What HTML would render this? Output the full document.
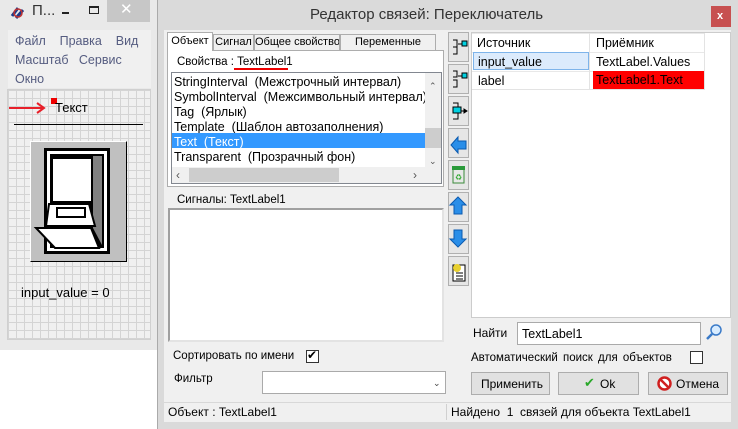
<!DOCTYPE html>
<html><head><meta charset="utf-8"><style>
*{box-sizing:border-box;margin:0;padding:0}
body{width:738px;height:429px;overflow:hidden;background:#fff;font-family:"Liberation Sans",sans-serif;font-size:12px;color:#000;position:relative}
.a{position:absolute}
.t{position:absolute;white-space:nowrap;line-height:14px}
.btn{position:absolute;background:#e1e1e1;border:1px solid #adadad}
.vb{position:absolute;left:448px;width:21px;height:30px;background:#e6e6e6;border:1px solid #b0b0b0}
.tab{position:absolute;background:#f0f0f0;border:1px solid #adadad;font-size:11px;text-align:center;line-height:15px;overflow:hidden;white-space:nowrap}
</style></head><body>
<!-- left window -->
<div class="a" style="left:0;top:0;width:158px;height:350px;background:#e9e9e9;border-right:1px solid #c8c8c8"></div>
<div class="a" style="left:107px;top:0;width:43px;height:22px;background:#c7c7c7"></div>
<div class="t" style="left:120px;top:3px;font-size:15px;color:#fff">✕</div>
<div class="t" style="left:32px;top:4px;font-size:15px;color:#333">П...</div>
<svg class="a" style="left:10px;top:6px" width="16" height="14"><path d="M2 10 L8 2 M6 12 L13 4" stroke="#1a3a8a" stroke-width="3"/><circle cx="8" cy="7" r="4" fill="none" stroke="#c03030" stroke-width="1.5"/></svg>
<div class="a" style="left:62px;top:12px;width:7px;height:2px;background:#222"></div>
<div class="a" style="left:89px;top:6px;width:10px;height:8px;border:1px solid #222;border-top-width:2px"></div>
<div class="a" style="left:8px;top:30px;width:143px;height:58px;background:#f0f0f0"></div>
<div class="t" style="left:15px;top:34px;color:#555c80;font-size:12.5px">Файл&nbsp;&nbsp;&nbsp;&nbsp;Правка&nbsp;&nbsp;&nbsp;&nbsp;Вид</div>
<div class="t" style="left:15px;top:53px;color:#555c80;font-size:12.5px">Масштаб&nbsp;&nbsp;&nbsp;Сервис</div>
<div class="t" style="left:15px;top:72px;color:#555c80;font-size:12.5px">Окно</div>
<div class="a" style="left:7px;top:89px;width:144px;height:251px;background-color:#f0f0f0;background-image:linear-gradient(#d4d4d4 1px,transparent 1px),linear-gradient(90deg,#d4d4d4 1px,transparent 1px);background-size:8px 8px;border:1px solid #d0d0d0"></div>
<div class="a" style="left:9px;top:107px;width:34px;height:2px;background:#e8202a"></div>
<svg class="a" style="left:36px;top:102px" width="10" height="12"><path d="M1 1 L8 6 L1 11" stroke="#e8202a" stroke-width="2" fill="none"/></svg>
<div class="a" style="left:51px;top:98px;width:6px;height:6px;background:#e00"></div>
<div class="t" style="left:55px;top:101px;font-size:13px">Текст</div>
<div class="a" style="left:14px;top:124px;width:129px;height:1px;background:#000"></div>
<div class="a" style="left:30px;top:141px;width:97px;height:121px;background:#c0c0c0;border:1px solid #fff;border-right-color:#000;border-bottom-color:#000"></div>
<svg class="a" style="left:31px;top:142px" width="95" height="119">
<rect x="13" y="6" width="66" height="106" fill="#000"/><rect x="16" y="9" width="60" height="100" fill="#fff"/><rect x="19" y="12" width="54" height="94" fill="#000"/>
<rect x="22" y="17" width="38" height="42" fill="#fff"/><path d="M62 14 L71 14 L71 103 L62 86Z" fill="#808080"/>
<path d="M18 62 L58 62 L64 84 L15 84 Z" fill="#fff" stroke="#000" stroke-width="2"/><rect x="26" y="66" width="28" height="9" fill="#fff" stroke="#000" stroke-width="2"/>
<path d="M5 86 L60 86 L68 106 L24 106 Z" fill="#fff" stroke="#000" stroke-width="2"/></svg>
<div class="t" style="left:21px;top:286px;font-size:13px;color:#000">input_value = 0</div>
<!-- dialog -->
<div class="a" style="left:157px;top:0;width:581px;height:429px;background:#dadada;border-left:1px solid #aaa"></div>
<div class="t" style="left:310px;top:8px;font-size:15px;color:#333">Редактор связей: Переключатель</div>
<div class="a" style="left:711px;top:6px;width:20px;height:21px;background:#c75050"></div>
<div class="t" style="left:717px;top:9px;color:#fff;font-size:11px;font-weight:bold">x</div>
<div class="a" style="left:164px;top:30px;width:567px;height:392px;background:#f0f0f0"></div>
<!-- tabs -->
<div class="a" style="left:167px;top:50px;width:277px;height:137px;background:#fff;border:1px solid #adadad"></div>
<div class="tab" style="left:213px;top:34px;width:41px;height:17px">Сигнал</div>
<div class="tab" style="left:254px;top:34px;width:86px;height:17px">Общее свойство</div>
<div class="tab" style="left:340px;top:34px;width:96px;height:17px">Переменные</div>
<div class="tab" style="left:167px;top:32px;width:46px;height:19px;background:#fff;border-bottom:none;line-height:17px">Объект</div>
<div class="t" style="left:177px;top:55px;font-size:11.5px">Свойства : TextLabel1</div>
<div class="a" style="left:234px;top:68px;width:54px;height:2px;background:#e00"></div>
<div class="a" style="left:171px;top:72px;width:271px;height:112px;border:1px solid #828790;background:#fff"></div>
<div class="t" style="left:174px;top:75px;font-size:12.5px">StringInterval&nbsp; (Межстрочный интервал)</div>
<div class="t" style="left:174px;top:90px;font-size:12.5px">SymbolInterval&nbsp; (Межсимвольный интервал)</div>
<div class="t" style="left:174px;top:105px;font-size:12.5px">Tag&nbsp; (Ярлык)</div>
<div class="t" style="left:174px;top:120px;font-size:12.5px">Template&nbsp; (Шаблон автозаполнения)</div>
<div class="a" style="left:172px;top:133px;width:253px;height:15px;background:#3399ff"></div>
<div class="t" style="left:174px;top:135px;font-size:12.5px;color:#fff">Text&nbsp; (Текст)</div>
<div class="t" style="left:174px;top:150px;font-size:12.5px">Transparent&nbsp; (Прозрачный фон)</div>
<div class="a" style="left:425px;top:73px;width:16px;height:94px;background:#f0f0f0"></div>
<div class="a" style="left:425px;top:128px;width:16px;height:20px;background:#cdcdcd"></div>
<div class="t" style="left:429px;top:79px;font-size:9px;color:#555">⌃</div>
<div class="t" style="left:429px;top:154px;font-size:9px;color:#555">⌄</div>
<div class="a" style="left:172px;top:167px;width:253px;height:16px;background:#f0f0f0"></div>
<div class="a" style="left:189px;top:168px;width:150px;height:14px;background:#cdcdcd"></div>
<div class="t" style="left:176px;top:168px;color:#555">‹</div><div class="t" style="left:413px;top:168px;color:#555">›</div>
<div class="a" style="left:425px;top:167px;width:16px;height:16px;background:#f0f0f0"></div>
<div class="t" style="left:177px;top:193px;font-size:11.5px">Сигналы: TextLabel1</div>
<div class="a" style="left:168px;top:208px;width:276px;height:134px;background:#fff;border:2px solid #a0a0a0;border-right-color:#e3e3e3;border-bottom-color:#e3e3e3"></div>
<div class="t" style="left:173px;top:349px;font-size:11.5px">Сортировать по имени</div>
<div class="a" style="left:306px;top:350px;width:13px;height:13px;border:1px solid #333;background:#fff"></div>
<div class="t" style="left:307px;top:348px;font-size:12px">✔</div>
<div class="t" style="left:174px;top:372px;font-size:11.5px">Фильтр</div>
<div class="a" style="left:262px;top:371px;width:184px;height:23px;background:#fff;border:1px solid #aaa"></div>
<div class="t" style="left:433px;top:376px;font-size:9px;color:#444">⌄</div>
<!-- vertical buttons -->
<div class="vb" style="top:32px"></div><div class="vb" style="top:64px"></div><div class="vb" style="top:96px"></div><div class="vb" style="top:128px"></div><div class="vb" style="top:160px"></div><div class="vb" style="top:192px"></div><div class="vb" style="top:224px"></div><div class="vb" style="top:256px"></div>
<svg class="a" style="left:448px;top:32px" width="21" height="256">
<g stroke="#000" fill="none"><path d="M5 8 H9 V22 H5 M5 15 H9 M10 12 H14"/><rect x="14" y="9" width="5" height="5" fill="#00d0e0"/>
<path d="M5 39 H9 V45 H5 M5 48 H9 V55 H5 M10 44 H14"/><rect x="14" y="41" width="5" height="5" fill="#00d0e0"/>
<path d="M5 71 H10 V87 H5 M12 79 H18"/><rect x="5" y="75" width="8" height="6" fill="#00d0e0"/><path d="M16 77 L19 79 L16 81Z" fill="#000"/></g>
<path d="M3 113 L10 105 V109 H18 V117 H10 V121Z" fill="#2a8ee8" stroke="#0a5ab0"/>
<rect x="5" y="137" width="11" height="14" fill="#e8e8e8" stroke="#3a8a3a"/><rect x="4" y="134" width="13" height="4" fill="#2a9a3a"/><text x="7" y="148" font-size="8" fill="#3a3">♻</text>
<path d="M10 165 L18 173 H14 V182 H6 V173 H2Z" fill="#2a8ee8" stroke="#0a5ab0"/>
<path d="M10 215 L18 207 H14 V198 H6 V207 H2Z" fill="#2a8ee8" stroke="#0a5ab0"/>
<rect x="5" y="233" width="12" height="16" fill="#fff" stroke="#000"/><circle cx="9" cy="236" r="4" fill="#e8d030"/><path d="M8 241 H15 M8 244 H15 M8 247 H15" stroke="#000"/></svg>
<!-- grid -->
<div class="a" style="left:471px;top:32px;width:260px;height:286px;background:#fff;border:1px solid #ccc"></div>
<div class="a" style="left:472px;top:33px;width:233px;height:57px;background:linear-gradient(#e8e8e8 1px,transparent 1px);background-size:100% 19px"></div>
<div class="a" style="left:589px;top:33px;width:1px;height:57px;background:#e3e3e3"></div>
<div class="a" style="left:704px;top:33px;width:1px;height:57px;background:#e3e3e3"></div>
<div class="a" style="left:472px;top:89px;width:233px;height:1px;background:#e3e3e3"></div>
<div class="t" style="left:477px;top:36px;font-size:12.5px">Источник</div>
<div class="t" style="left:596px;top:36px;font-size:12.5px">Приёмник</div>
<div class="a" style="left:473px;top:52px;width:116px;height:18px;background:#dcebfc;border:1px solid #7eb4ea"></div>
<div class="t" style="left:478px;top:55px;font-size:12.5px">input_value</div>
<div class="t" style="left:596px;top:55px;font-size:12.5px">TextLabel.Values</div>
<div class="t" style="left:478px;top:74px;font-size:12.5px">label</div>
<div class="a" style="left:593px;top:71px;width:111px;height:18px;background:#f00"></div>
<div class="t" style="left:596px;top:73px;font-size:12.5px">TextLabel1.Text</div>
<div class="t" style="left:473px;top:326px">Найти</div>
<div class="a" style="left:517px;top:322px;width:184px;height:23px;background:#fff;border:1px solid #aaa"></div>
<div class="t" style="left:522px;top:327px;font-size:12.5px">TextLabel1</div>
<svg class="a" style="left:705px;top:323px" width="18" height="18"><circle cx="11" cy="7" r="5" fill="#d8ecff" stroke="#3a7ac8" stroke-width="1.5"/><path d="M7 11 L2 16" stroke="#3a7ac8" stroke-width="2.5"/></svg>
<div class="t" style="left:471px;top:351px;word-spacing:2px;font-size:11.5px">Автоматический поиск для объектов</div>
<div class="a" style="left:690px;top:351px;width:13px;height:13px;border:1px solid #333;background:#fff"></div>
<div class="btn" style="left:471px;top:372px;width:79px;height:23px"></div><div class="t" style="left:481px;top:377px">Применить</div>
<div class="btn" style="left:558px;top:372px;width:81px;height:23px"></div><div class="t" style="left:584px;top:376px;font-size:13px;color:#2aa82a">✔</div><div class="t" style="left:600px;top:377px">Ok</div>
<div class="btn" style="left:648px;top:372px;width:80px;height:23px"></div>
<svg class="a" style="left:657px;top:376px" width="15" height="15"><circle cx="7.5" cy="7.5" r="6" fill="#fff" stroke="#d02020" stroke-width="2.5"/><path d="M3.5 3.5 L11.5 11.5" stroke="#d02020" stroke-width="2.5"/></svg>
<div class="t" style="left:676px;top:377px">Отмена</div>
<!-- status -->
<div class="a" style="left:164px;top:402px;width:567px;height:1px;background:#d8d8d8"></div>
<div class="a" style="left:446px;top:404px;width:1px;height:16px;background:#d0d0d0"></div>
<div class="t" style="left:168px;top:405px">Объект : TextLabel1</div>
<div class="t" style="left:451px;top:405px">Найдено&nbsp; 1&nbsp; связей для объекта TextLabel1</div>
</body></html>
